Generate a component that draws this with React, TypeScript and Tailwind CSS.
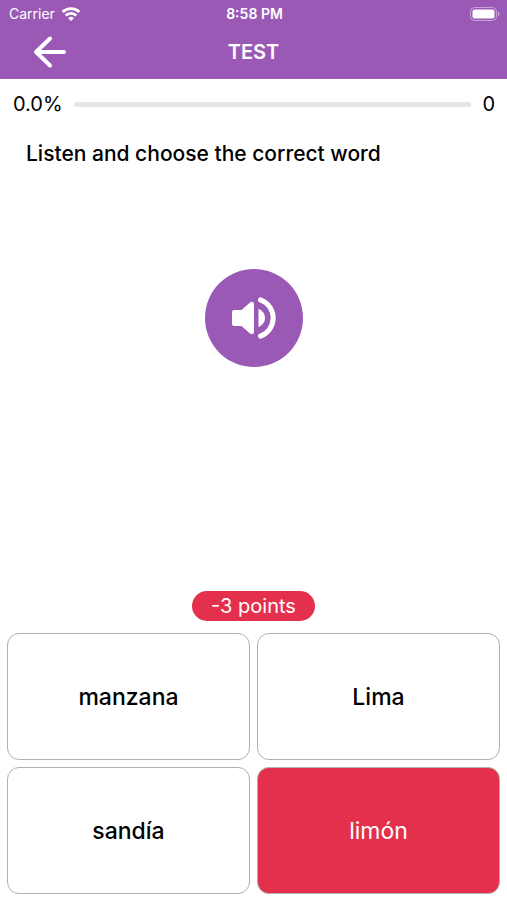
const choices = [
  { word: "manzana", wrong: false },
  { word: "Lima", wrong: false },
  { word: "sandía", wrong: false },
  { word: "limón", wrong: true },
];

function StatusBar() {
  return (
    <div className="grid grid-cols-3 items-center h-7 pl-[9px] pr-[7px] text-sm">
      <div className="flex items-center gap-[6px]">
        <span>Carrier</span>
        <svg width="20" height="14" viewBox="0 0 20 14" fill="none" stroke="currentColor" strokeWidth="2.8" aria-hidden="true">
          <path d="M1.700 4.900a12 12 0 0 1 16.600 0" />
          <path d="M4.700 8.600a7.600 7.600 0 0 1 10.600 0" />
          <path d="M7.200 11.200a4 4 0 0 1 5.600 0L10 14z" fill="currentColor" stroke="none" />
        </svg>
      </div>
      <span className="text-center font-semibold">8:58 PM</span>
      <svg className="justify-self-end" width="30" height="14" viewBox="0 0 30 14" fill="none" aria-hidden="true">
        <rect x="0.5" y="0.5" width="26" height="13" rx="4" stroke="#c9a3d8" />
        <rect x="2.5" y="2.5" width="22" height="9" rx="2" fill="white" />
        <path d="M28 4.500v5c2-1 2-4 0-5z" fill="#c9a3d8" />
      </svg>
    </div>
  );
}

export default function App() {
  return (
    <main className="flex flex-col min-h-screen bg-white text-black font-['Inter','Liberation_Sans',sans-serif]">
      <header className="bg-[#9b59b6] text-white">
        <StatusBar />
        <div className="grid grid-cols-3 items-center h-[51px] px-8 pb-[3px]">
          <button type="button" aria-label="Back" className="justify-self-start">
            <svg width="36" height="34" viewBox="0 0 36 34" fill="none" stroke="currentColor" strokeWidth="4" strokeLinecap="round" strokeLinejoin="round" aria-hidden="true">
              <path d="M32 17H4M18 3.500 4 17l14 13.500" />
            </svg>
          </button>
          <h1 className="text-center text-xl font-semibold">TEST</h1>
        </div>
      </header>

      <div className="flex items-center gap-[11px] h-[50px] pl-[13px] pr-3 text-xl">
        <span>0.0%</span>
        <div role="progressbar" aria-label="Progress" aria-valuenow={0} className="grow h-[5px] rounded-full bg-[#e5e5e5]" />
        <span>0</span>
      </div>

      <p className="px-[26px] pt-[9px] pb-[7px] text-[21px] font-medium leading-8">Listen and choose the correct word</p>

      <div className="flex grow flex-col items-center">
        <button type="button" aria-label="Play word" className="mt-[92px] flex size-[98px] items-center justify-center rounded-full bg-[#9b59b6] text-white">
          <svg width="48" height="44" viewBox="0 0 48 44" fill="currentColor" aria-hidden="true">
            <path d="M4 14h7.500l8.500-7.500Q21.500 5.500 22.800 6q1.200.6 1.200 2v28q0 1.400-1.200 2-1.300.5-2.800-.5L11.500 30H4q-2 0-2-2V16q0-2 2-2z" />
            <path d="M28.500 12.800q6.500 3.400 6.500 9.200t-6.500 9.200z" />
            <path d="M30.500 3.800a19.400 19.400 0 0 1 0 36.400" fill="none" stroke="currentColor" strokeWidth="5" strokeLinecap="round" />
          </svg>
        </button>
        <span className="mt-auto mb-3 rounded-full bg-[#e5304d] px-[19px] text-xl leading-[30px] text-white">-3 points</span>
      </div>

      <div className="grid grid-cols-2 gap-[7px] px-[7px] pb-[6px]">
        {choices.map(({ word, wrong }) => (
          <button
            key={word}
            type="button"
            className={
              wrong
                ? "h-[127px] rounded-xl border border-[#b0b0b0] bg-[#e5304d] pt-[2px] text-[23px] text-white"
                : "h-[127px] rounded-xl border border-[#b0b0b0] pt-[2px] text-[23px] font-medium"
            }
          >
            {word}
          </button>
        ))}
      </div>
    </main>
  );
}
